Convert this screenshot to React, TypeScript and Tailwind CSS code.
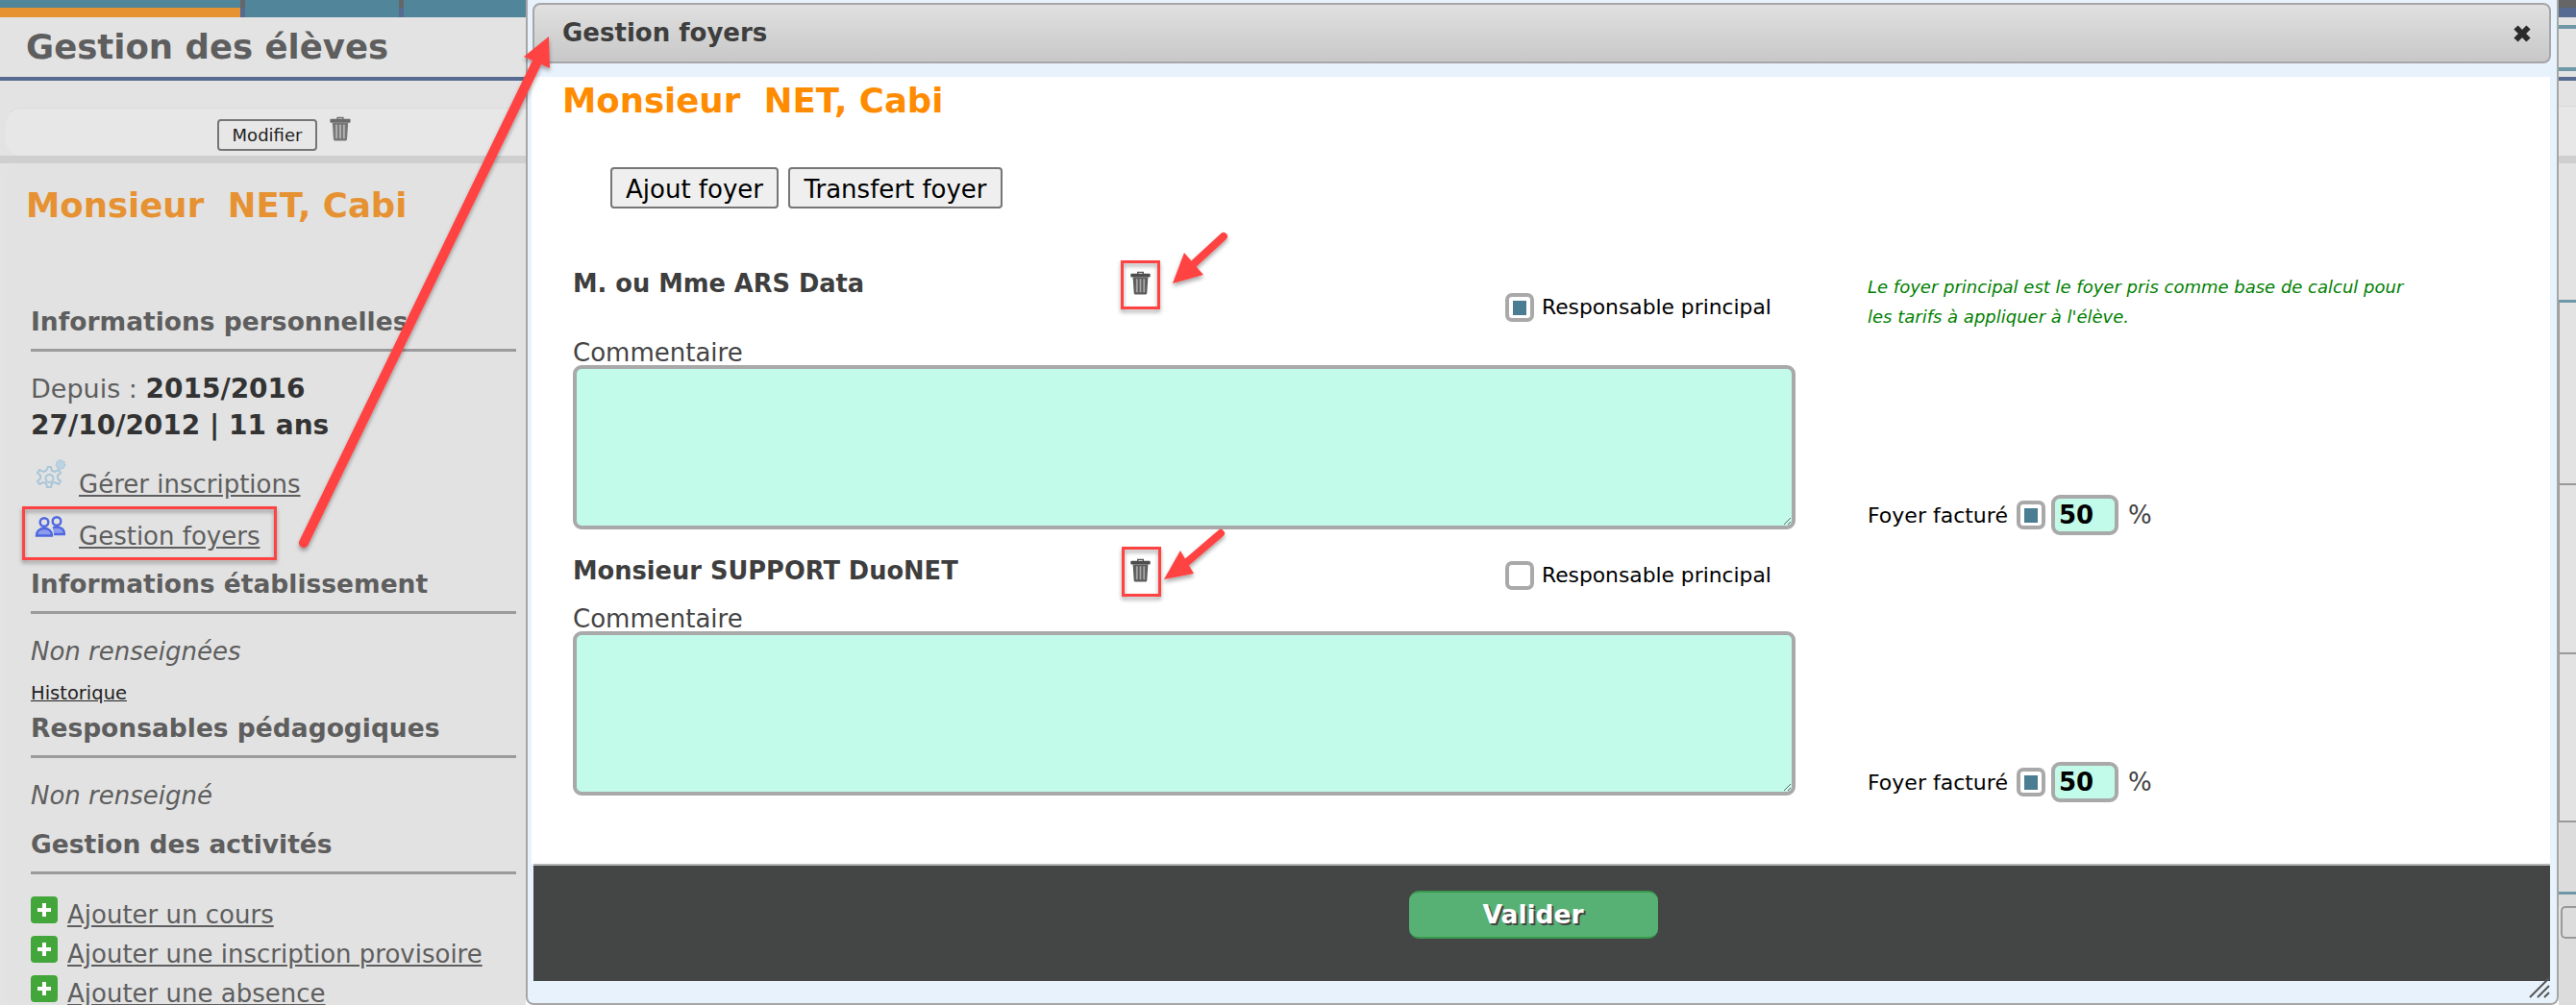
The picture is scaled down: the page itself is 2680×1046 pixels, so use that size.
import React from "react";

const TrashIcon = ({ className = "" }: { className?: string }) => (
  <svg className={className} viewBox="0 0 24 28" fill="none">
    <path d="M9 2.500h6V5H9z" stroke="#555" strokeWidth="1.5" />
    <rect x="1" y="4" width="22" height="4" rx="1" fill="#4d4d4d" />
    <path d="M3.500 8h17l-1.200 18a1.600 1.600 0 0 1-1.600 1.500H6.300a1.600 1.600 0 0 1-1.600-1.500z" fill="#5c5c5c" />
    <path d="M8 10v15M12 10v15M16 10v15" stroke="#a5a5a5" strokeWidth="2" />
  </svg>
);

const GearsIcon = () => (
  <svg className="w-[33px] h-[35px]" viewBox="0 0 33 35" fill="none" stroke="#a9c6d8" strokeWidth="2">
    <path d="M14 9l3 0 1 4 3 1 4-2 2 3-3 3v3l3 3-2 3-4-2-3 1-1 4h-4l-1-4-3-1-4 2-2-3 3-3v-3l-3-3 2-3 4 2 3-1z" />
    <circle cx="15.5" cy="21" r="4" />
    <circle cx="27" cy="6.5" r="4.5" fill="#bcd3e1" strokeWidth="1.5" strokeDasharray="2 1" />
  </svg>
);

const PeopleIcon = () => (
  <svg className="w-[32px] h-[22px]" viewBox="0 0 32 22" fill="none" stroke="#4f67e0" strokeWidth="2.4">
    <circle cx="10" cy="6.5" r="4.3" />
    <circle cx="23" cy="5.5" r="4.3" />
    <path d="M2 20.500c0-5 3.500-7.500 8-7.500s8 2.500 8 7.500z" fill="#8d9cec" />
    <path d="M19 12.500c1.200-.6 2.600-.9 4-.9 4.500 0 8 2.400 8 7.400H20" fill="#8d9cec" />
  </svg>
);

const PlusIcon = () => (
  <svg className="w-[28px] h-[28px] shrink-0" viewBox="0 0 28 28">
    <rect width="28" height="28" rx="4" fill="#43a63a" />
    <path d="M14 7v14M7 14h14" stroke="#fff" strokeWidth="4" />
  </svg>
);

const SideHeading = ({ children, className = "" }: { children: React.ReactNode; className?: string }) => (
  <h3 className={`w-[505px] h-[46px] ml-[26px] leading-[30px] text-[26.5px] font-bold text-[#5e5e5e] border-b-[3px] border-[#9b9b9b] whitespace-nowrap ${className}`}>
    {children}
  </h3>
);

const AddLink = ({ label }: { label: string }) => (
  <div className="flex items-start ml-[26px] h-[41px] shrink-0 gap-[10px]">
    <PlusIcon />
    <a className="text-[26px] leading-[28px] mt-[5px] text-[#5e5e5e] underline whitespace-nowrap">{label}</a>
  </div>
);

const Sidebar = () => (
  <aside className="w-[547px] shrink-0 h-full flex flex-col bg-[#e3e3e3]">
    <div className="flex h-[18px] shrink-0 bg-[#50859a]">
      <div className="w-[250px] mt-[8px] bg-[#e69233]" />
      <div className="w-[5px] flex flex-col">
        <div className="h-[8px] bg-[#666]" />
        <div className="h-[10px] bg-[#566a92]" />
      </div>
      <div className="w-[160px]" />
      <div className="w-[5px] flex flex-col">
        <div className="h-[8px] bg-[#666]" />
        <div className="h-[10px] bg-[#566a92]" />
      </div>
    </div>
    <div className="h-[62px] shrink-0 flex items-center pl-[27px] text-[35.5px] font-bold text-[#5e5e5e]">Gestion des élèves</div>
    <div className="h-[4px] shrink-0 bg-[#566a92]" />
    <div className="h-[28px] shrink-0" />
    <div className="h-[50px] shrink-0 ml-[6px] rounded-l-[16px] bg-[#e7e7e7] border-t border-[#dadada] flex items-start pl-[220px]">
      <button className="w-[104px] h-[33px] mt-[11px] rounded-[4px] border-2 border-[#767676] text-[18px] text-[#222]">Modifier</button>
      <TrashIcon className="w-[24px] h-[27px] ml-[12px] mt-[7px] opacity-80" />
    </div>
    <div className="h-[8px] shrink-0 bg-[#cfcfcf]" />
    <div className="flex-1 flex flex-col ml-[6px] rounded-tl-[16px] bg-[#e2e2e2] overflow-hidden">
      <div className="mt-[27px] ml-[21px] h-[34px] leading-[34px] text-[35.5px] font-bold text-[#e69233] whitespace-pre shrink-0">Monsieur  NET, Cabi</div>
      <SideHeading className="mt-[89px] shrink-0">Informations personnelles</SideHeading>
      <div className="mt-[20px] ml-[26px] text-[27px] leading-[38px] text-[#5e5e5e] shrink-0 whitespace-nowrap">
        Depuis : <b className="text-[28px] text-[#333]">2015/2016</b>
        <br />
        <b className="text-[28px] text-[#333]">27/10/2012 | 11 ans</b>
      </div>
      <div className="mt-[15px] ml-[30px] h-[53px] shrink-0 flex items-start gap-[13px]">
        <GearsIcon />
        <a className="text-[26px] leading-[28px] mt-[13px] text-[#5e5e5e] underline">Gérer inscriptions</a>
      </div>
      <div className="ml-[30px] h-[53px] shrink-0 flex items-start gap-[14px]">
        <span className="mt-[7px]">
          <PeopleIcon />
        </span>
        <a className="text-[26px] leading-[28px] mt-[14px] text-[#5e5e5e] underline">Gestion foyers</a>
      </div>
      <SideHeading className="mt-[10px] shrink-0">Informations établissement</SideHeading>
      <p className="mt-[24px] ml-[26px] h-[30px] leading-[30px] text-[26px] italic text-[#5e5e5e] shrink-0">Non renseignées</p>
      <a className="mt-[19px] ml-[26px] h-[20px] leading-[20px] text-[19.5px] text-[#222] underline shrink-0">Historique</a>
      <SideHeading className="mt-[11px] shrink-0">Responsables pédagogiques</SideHeading>
      <p className="mt-[24px] ml-[26px] h-[30px] leading-[30px] text-[26px] italic text-[#5e5e5e] shrink-0">Non renseigné</p>
      <SideHeading className="mt-[21px] shrink-0">Gestion des activités</SideHeading>
      <div className="h-[23px] shrink-0" />
      <AddLink label="Ajouter un cours" />
      <AddLink label="Ajouter une inscription provisoire" />
      <AddLink label="Ajouter une absence" />
    </div>
  </aside>
);

const CheckBox = ({ checked }: { checked?: boolean }) => (
  <span className="w-[30px] h-[30px] shrink-0 rounded-[7px] border-[4px] border-[#a9a9a9] bg-white flex items-center justify-center">
    {checked && <span className="w-[14px] h-[15px] bg-[#4a7d92]" />}
  </span>
);

const BilledRow = ({ className = "" }: { className?: string }) => (
  <div className={`flex items-center text-[22px] text-black ${className}`}>
    <span>Foyer facturé</span>
    <span className="ml-[9px]">
      <CheckBox checked />
    </span>
    <input
      readOnly
      value="50"
      className="ml-[6px] w-[70px] h-[42px] rounded-[9px] border-[4px] border-[#a9a9a9] bg-[#c2fbe9] pl-[4px] text-[26px] font-bold text-black outline-none"
    />
    <span className="ml-[10px] text-[26px] text-[#444]">%</span>
  </div>
);

interface FoyerProps {
  name: string;
  checked?: boolean;
  sectionClass: string;
  headerClass: string;
  namePad: string;
  checkPad: string;
  right: React.ReactNode;
}

const FoyerRow = ({ name, checked, sectionClass, headerClass, namePad, checkPad, right }: FoyerProps) => (
  <section className={`flex pl-[43px] ${sectionClass}`}>
    <div className="w-[1272px] shrink-0">
      <div className={`flex items-start ${headerClass}`}>
        <div className={`w-[570px] text-[25.7px] leading-[28px] font-bold text-[#3e3e3e] whitespace-nowrap ${namePad}`}>{name}</div>
        <div className="w-[40px] flex justify-center pt-[10px]">
          <TrashIcon className="w-[23px] h-[26px]" />
        </div>
        <div className={`ml-[360px] flex items-center gap-[8px] text-[21.8px] text-black whitespace-nowrap ${checkPad}`}>
          <CheckBox checked={checked} />
          <span>Responsable principal</span>
        </div>
      </div>
      <label className="block h-[25px] leading-[24px] text-[26px] text-[#444]">Commentaire</label>
      <textarea readOnly className="block w-full h-[171px] rounded-[9px] border-[4px] border-[#a9a9a9] bg-[#c2fbe9] outline-none" />
    </div>
    <div className="ml-[75px] w-[600px]">{right}</div>
  </section>
);

const Modal = () => (
  <main className="w-[2115px] shrink-0 h-[1046px] border-l-2 border-r-2 border-b-2 border-[#a6a6a6] rounded-b-[8px] bg-[#e8f2fc] flex flex-col pl-[4px] pr-[7px] relative">
    <header className="mt-[3px] h-[63px] shrink-0 ml-[1px] -mr-[1px] rounded-[8px] border-2 border-[#a6a6a6] bg-gradient-to-b from-[#e0e0e0] to-[#c8c8c8] flex items-center justify-between pl-[29px] pr-[18px]">
      <span className="text-[26px] font-bold text-[#3e3e3e]">Gestion foyers</span>
      <svg className="w-[20px] h-[20px]" viewBox="0 0 20 20">
        <path d="M3.500 3.500l13 13M16.500 3.500l-13 13" stroke="#2b2b2b" strokeWidth="6" />
      </svg>
    </header>
    <div className="h-[14px] shrink-0" />
    <div className="h-[819px] shrink-0 bg-white flex flex-col">
      <div className="mt-[10px] ml-[32px] h-[30px] leading-[30px] text-[35.5px] font-bold text-[#ff8c00] whitespace-pre">Monsieur  NET, Cabi</div>
      <div className="mt-[54px] ml-[82px] flex gap-[10px]">
        <button className="w-[175px] h-[43px] rounded-[4px] border-2 border-[#767676] bg-[#efefef] text-[26px] leading-[30px] pt-[2px] text-black">Ajout foyer</button>
        <button className="w-[223px] h-[43px] rounded-[4px] border-2 border-[#767676] bg-[#efefef] text-[26px] leading-[30px] pt-[2px] text-black">Transfert foyer</button>
      </div>
      <FoyerRow
        name="M. ou Mme ARS Data"
        checked
        sectionClass="mt-[54px]"
        headerClass="h-[84px]"
        namePad="pt-[10px]"
        checkPad="pt-[33px]"
        right={
          <>
            <p className="pt-[12px] text-[18px] leading-[31px] italic text-[#008000] whitespace-nowrap">
              Le foyer principal est le foyer pris comme base de calcul pour
              <br />
              les tarifs à appliquer à l'élève.
            </p>
            <BilledRow className="mt-[170px]" />
          </>
        }
      />
      <FoyerRow
        name="Monsieur SUPPORT DuoNET"
        sectionClass="mt-[13px]"
        headerClass="h-[62px]"
        namePad="pt-[10px]"
        checkPad="pt-[13px]"
        right={<BilledRow className="mt-[223px]" />}
      />
    </div>
    <footer className="h-[122px] shrink-0 ml-[2px] border-t-2 border-[#b5b5b5] bg-[#444645] flex justify-center pr-[18px] pt-[26px]">
      <button className="w-[259px] h-[50px] rounded-[10px] border-y-2 border-[#38994e] bg-[#58b174] text-[26.5px] font-bold text-white [text-shadow:2px_2px_0_#444]">Valider</button>
    </footer>
    <svg className="absolute right-[7px] bottom-[5px] w-[22px] h-[22px]" viewBox="0 0 22 22" stroke="#555" strokeWidth="2">
      <path d="M1 21L21 1M9 21L21 9M16 21l5-5" />
    </svg>
  </main>
);

// bit of the page behind the dialog, on the right
const RightStrip = () => (
  <div className="w-[18px] shrink-0 flex flex-col bg-[#e3e3e3]">
    <div className="h-[8px] bg-[#666]" />
    <div className="h-[10px] bg-[#566a92]" />
    <div className="h-[8px]" />
    <div className="h-[4px] bg-[#6e98a8]" />
    <div className="h-[40px]" />
    <div className="h-[4px] bg-[#6e98a8]" />
    <div className="h-[6px]" />
    <div className="h-[4px] bg-[#566a92]" />
    <div className="h-[26px]" />
    <div className="h-[52px] bg-[#e7e7e7] border-t border-[#dadada]" />
    <div className="h-[8px] bg-[#cfcfcf]" />
    <div className="h-[142px]" />
    <div className="h-[3px] bg-[#6e98a8]" />
    <div className="h-[188px] border-l border-[#999]" />
    <div className="h-[176px] border-l border-t-2 border-[#999]" />
    <div className="h-[175px] border-l border-t-2 border-[#999]" />
    <div className="h-[74px] border-t-2 border-[#999] bg-[#dcdcdc]" />
    <div className="h-[3px] bg-[#6e98a8]" />
    <div className="h-[12px] bg-[#dcdcdc]" />
    <div className="h-[34px] ml-[2px] rounded-l-[5px] border-y-2 border-l-2 border-[#999] bg-[#dcdcdc]" />
    <div className="flex-1 bg-[#dcdcdc]" />
  </div>
);

const Arrow = ({ tail, tip, a, b, width }: { tail: number[]; tip: number[]; a: number[]; b: number[]; width: number }) => {
  const neck = [(a[0] + b[0]) / 2, (a[1] + b[1]) / 2];
  return (
    <g filter="url(#mark-shadow)">
      <line x1={tail[0]} y1={tail[1]} x2={neck[0]} y2={neck[1]} stroke="#ff4343" strokeWidth={width} strokeLinecap="round" />
      <polygon points={`${tip} ${a} ${b}`} fill="#ff4343" />
    </g>
  );
};

// red marks drawn by hand on top of the screenshot
const Annotations = () => (
  <svg className="absolute inset-0 w-[2680px] h-[1046px] pointer-events-none" viewBox="0 0 2680 1046" fill="none">
    <defs>
      <filter id="mark-shadow" x="-20%" y="-20%" width="140%" height="140%">
        <feDropShadow dx="0" dy="3" stdDeviation="2" floodColor="#000" floodOpacity="0.35" />
      </filter>
    </defs>
    <g filter="url(#mark-shadow)" stroke="#ff4343" strokeWidth="3">
      <rect x="24.500" y="528.500" width="262" height="53" />
      <rect x="1167.500" y="272.500" width="38" height="48" />
      <rect x="1168.500" y="570.500" width="38" height="49" />
    </g>
    <Arrow tail={[316, 565]} tip={[571, 38]} a={[545, 59]} b={[572, 71]} width={10} />
    <Arrow tail={[1273, 246]} tip={[1220, 295]} a={[1232, 263]} b={[1252, 286]} width={8} />
    <Arrow tail={[1270, 555]} tip={[1211, 603]} a={[1228, 573]} b={[1242, 597]} width={8} />
  </svg>
);

export default function App() {
  return (
    <div className="relative w-[2680px] h-[1046px] overflow-hidden flex bg-white font-['DejaVu_Sans',sans-serif]">
      <Sidebar />
      <Modal />
      <RightStrip />
      <Annotations />
    </div>
  );
}
